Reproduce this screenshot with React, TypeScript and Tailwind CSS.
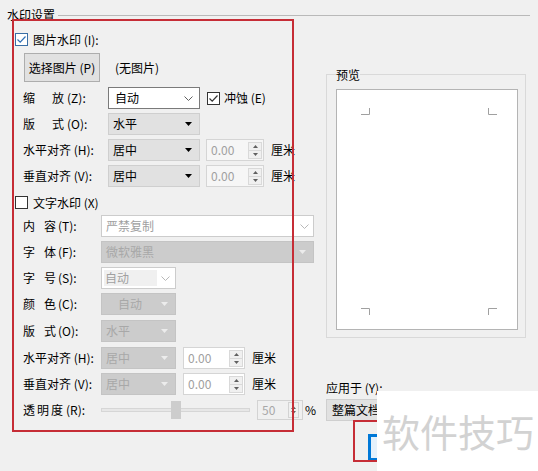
import React from "react";

const Tri = ({ color = "#000" }: { color?: string }) => (
  <svg width="7" height="4" viewBox="0 0 7 4">
    <path d="M0 0h7L3.5 4z" fill={color} />
  </svg>
);

const Chev = ({ color = "#606060" }: { color?: string }) => (
  <svg width="9" height="5" viewBox="0 0 9 5">
    <path d="M0.5 0.5L4.5 4.5L8.5 0.5" fill="none" stroke={color} strokeWidth="1" />
  </svg>
);

function Check({ checked, blue }: { checked?: boolean; blue?: boolean }) {
  return (
    <div
      className={`w-[13px] h-[13px] bg-white border flex items-center justify-center shrink-0 ${
        blue ? "border-[#3a6ea5]" : "border-[#333333]"
      }`}
    >
      {checked && (
        <svg width="11" height="11" viewBox="0 0 11 11">
          <path d="M1.5 5.5L4.2 8.2L9.5 2.5" fill="none" stroke={blue ? "#2f6fb5" : "#333"} strokeWidth="1.2" />
        </svg>
      )}
    </div>
  );
}

function GrayCombo({ text, w, disabled, center }: { text: string; w: string; disabled?: boolean; center?: boolean }) {
  return (
    <div
      className={`${w} h-[22px] border flex items-center pr-[7px] shrink-0 ${
        disabled ? "bg-[#cccccc] border-[#c4c4c4] text-[#a8a8a8]" : "bg-[#e1e1e1] border-[#cfcfcf] text-black"
      } ${center ? "pl-[16px]" : "pl-[4px]"}`}
    >
      <span className="flex-1 leading-[16px]">{text}</span>
      <Tri color={disabled ? "#ececec" : "#000"} />
    </div>
  );
}

function Spin({ w, white, value }: { w: string; white?: boolean; value: string }) {
  return (
    <div
      className={`${w} h-[22px] border border-[#d5d5d5] flex items-center pl-[4px] pr-[1px] shrink-0 ${
        white ? "bg-white" : "bg-[#f6f6f6]"
      }`}
    >
      <span className="flex-1 text-[#a0a0a0] leading-[16px]">{value}</span>
      <div className="w-[14px] h-[17px] border border-[#d9d9d9] bg-[#f0f0f0] flex flex-col">
        <div className="flex-1 flex items-center justify-center border-b border-[#d9d9d9]">
          <svg width="5" height="3" viewBox="0 0 5 3">
            <path d="M0 3h5L2.5 0z" fill="#606060" />
          </svg>
        </div>
        <div className="flex-1 flex items-center justify-center">
          <svg width="5" height="3" viewBox="0 0 5 3">
            <path d="M0 0h5L2.5 3z" fill="#606060" />
          </svg>
        </div>
      </div>
    </div>
  );
}

export default function App() {
  return (
    <div className="relative w-[538px] h-[471px] overflow-hidden bg-[#f0f0f0] text-[12px] text-black font-['Noto_Sans_CJK_SC','Microsoft_YaHei',sans-serif]">
      {/* group header */}
      <div className="h-[19px] flex items-start pl-[7px] pr-[8px]">
        <span className="mt-[7px] leading-[16px]">水印设置</span>
        <div className="flex-1 h-px bg-[#b9b9b9] mt-[15px] ml-[3px]" />
      </div>

      <div className="flex">
        {/* left column */}
        <div className="w-[326px] flex flex-col">
          <div className="mt-[14px] h-[13px] flex items-center pl-[15px] gap-[5px]">
            <Check checked blue />
            <span className="leading-[16px]">图片水印 (I):</span>
          </div>

          <div className="mt-[7px] h-[29px] flex items-center pl-[24px]">
            <button className="w-[76px] h-[29px] bg-[#e1e1e1] border border-[#adadad] leading-[16px]">
              选择图片 (P)
            </button>
            <span className="ml-[15px] leading-[16px]">(无图片)</span>
          </div>

          <div className="mt-[5px] h-[22px] flex items-center pl-[23px]">
            <div className="w-[85px] flex leading-[16px]">
              <span>缩</span>
              <span className="ml-[17px]">放</span>
              <span className="ml-[3px]">(Z):</span>
            </div>
            <div className="w-[92px] h-[22px] bg-white border border-[#7a7a7a] flex items-center pl-[6px] pr-[6px]">
              <span className="flex-1 leading-[16px]">自动</span>
              <Chev />
            </div>
            <div className="ml-[7px]">
              <Check checked />
            </div>
            <span className="ml-[4px] leading-[16px]">冲蚀 (E)</span>
          </div>

          <div className="mt-[4px] h-[22px] flex items-center pl-[23px]">
            <div className="w-[85px] flex leading-[16px]">
              <span>版</span>
              <span className="ml-[17px]">式</span>
              <span className="ml-[3px]">(O):</span>
            </div>
            <GrayCombo text="水平" w="w-[92px]" />
          </div>

          <div className="mt-[4px] h-[22px] flex items-center pl-[23px]">
            <div className="w-[85px] leading-[16px]">水平对齐 (H):</div>
            <GrayCombo text="居中" w="w-[92px]" />
            <div className="ml-[6px]">
              <Spin w="w-[58px]" value="0.00" />
            </div>
            <span className="ml-[7px] leading-[16px]">厘米</span>
          </div>

          <div className="mt-[4px] h-[22px] flex items-center pl-[23px]">
            <div className="w-[85px] leading-[16px]">垂直对齐 (V):</div>
            <GrayCombo text="居中" w="w-[92px]" />
            <div className="ml-[6px]">
              <Spin w="w-[58px]" value="0.00" />
            </div>
            <span className="ml-[7px] leading-[16px]">厘米</span>
          </div>

          <div className="mt-[9px] h-[13px] flex items-center pl-[15px] gap-[5px]">
            <Check />
            <span className="leading-[16px]">文字水印 (X)</span>
          </div>

          <div className="mt-[6px] h-[22px] flex items-center pl-[23px]">
            <div className="w-[78px] flex leading-[16px]">
              <span>内</span>
              <span className="ml-[9px]">容</span>
              <span className="ml-[2px]">(T):</span>
            </div>
            <div className="w-[213px] h-[22px] bg-white border border-[#cccccc] flex items-center pl-[4px] pr-[4px]">
              <span className="flex-1 text-[#a0a0a0] leading-[16px]">严禁复制</span>
              <Chev color="#b8b8b8" />
            </div>
          </div>

          <div className="mt-[4px] h-[22px] flex items-center pl-[23px]">
            <div className="w-[78px] flex leading-[16px]">
              <span>字</span>
              <span className="ml-[9px]">体</span>
              <span className="ml-[2px]">(F):</span>
            </div>
            <GrayCombo text="微软雅黑" w="w-[213px]" disabled />
          </div>

          <div className="mt-[4px] h-[22px] flex items-center pl-[23px]">
            <div className="w-[78px] flex leading-[16px]">
              <span>字</span>
              <span className="ml-[9px]">号</span>
              <span className="ml-[2px]">(S):</span>
            </div>
            <div className="w-[75px] h-[22px] bg-white border border-[#cccccc] flex items-center pl-[2px] pr-[5px]">
              <div className="w-[53px] h-[16px] bg-[#f0f0f0] flex items-center pl-[1px] text-[#a0a0a0] leading-[16px]">
                自动
              </div>
              <div className="flex-1 flex justify-end">
                <Chev color="#b8b8b8" />
              </div>
            </div>
          </div>

          <div className="mt-[4px] h-[22px] flex items-center pl-[23px]">
            <div className="w-[78px] flex leading-[16px]">
              <span>颜</span>
              <span className="ml-[9px]">色</span>
              <span className="ml-[2px]">(C):</span>
            </div>
            <GrayCombo text="自动" w="w-[75px]" disabled center />
          </div>

          <div className="mt-[5px] h-[22px] flex items-center pl-[23px]">
            <div className="w-[78px] flex leading-[16px]">
              <span>版</span>
              <span className="ml-[9px]">式</span>
              <span className="ml-[2px]">(O):</span>
            </div>
            <GrayCombo text="水平" w="w-[75px]" disabled />
          </div>

          <div className="mt-[5px] h-[22px] flex items-center pl-[23px]">
            <div className="w-[78px] leading-[16px]">水平对齐 (H):</div>
            <GrayCombo text="居中" w="w-[75px]" disabled />
            <div className="ml-[7px]">
              <Spin w="w-[62px]" value="0.00" white />
            </div>
            <span className="ml-[7px] leading-[16px]">厘米</span>
          </div>

          <div className="mt-[4px] h-[22px] flex items-center pl-[23px]">
            <div className="w-[78px] leading-[16px]">垂直对齐 (V):</div>
            <GrayCombo text="居中" w="w-[75px]" disabled />
            <div className="ml-[7px]">
              <Spin w="w-[62px]" value="0.00" white />
            </div>
            <span className="ml-[7px] leading-[16px]">厘米</span>
          </div>

          <div className="mt-[4px] h-[21px] flex items-center pl-[23px]">
            <div className="w-[78px] flex leading-[16px]">
              <span>透</span>
              <span className="ml-[2px]">明</span>
              <span className="ml-[2px]">度</span>
              <span className="ml-[3px]">(R):</span>
            </div>
            <div className="relative w-[149px] h-[18px] flex items-center">
              <div className="w-full h-[4px] bg-[#e7e7e7] border border-[#d6d6d6]" />
              <div className="absolute left-[70px] top-0 w-[10px] h-[18px] bg-[#cdcdcd]" />
            </div>
            <div className="ml-[7px] w-[46px] h-[20px] border border-[#d3d3d3] flex items-center pl-[4px] pr-[3px]">
              <span className="flex-1 text-[#a8a8a8] leading-[16px]">50</span>
              <div className="w-[11px] h-[16px] border border-[#d3d3d3] flex flex-col items-center justify-center gap-[2px]">
                <svg width="5" height="3" viewBox="0 0 5 3">
                  <path d="M0 3h5L2.5 0z" fill="#606060" />
                </svg>
                <svg width="5" height="3" viewBox="0 0 5 3">
                  <path d="M0 0h5L2.5 3z" fill="#606060" />
                </svg>
              </div>
            </div>
            <span className="ml-[2px] leading-[16px]">%</span>
          </div>
        </div>

        {/* right column */}
        <div className="w-[200px] flex flex-col">
          <div className="relative mt-[55px] h-[264px] border border-[#d9d9d9]">
            <span className="absolute left-[9px] -top-[8px] leading-[16px] bg-[#f0f0f0]">预览</span>
            <div className="mt-[14px] ml-[9px] w-[182px] h-[241px] bg-white border border-[#b4b4b4]">
              <svg width="180" height="239" viewBox="0 0 180 239">
                <g fill="none" stroke="#a0a0a0" strokeWidth="1">
                  <path d="M24 24.5H32.5V18" />
                  <path d="M151.5 18V24.5H160" />
                  <path d="M24 218.5H32.5V225" />
                  <path d="M151.5 225V218.5H160" />
                </g>
              </svg>
            </div>
          </div>
          <span className="mt-[42px] leading-[16px]">应用于 (Y):</span>
          <div className="mt-[3px] w-[140px] h-[22px] bg-[#e1e1e1] border border-[#cfcfcf] flex items-center pl-[5px] pr-[7px]">
            <span className="flex-1 leading-[16px]">整篇文档</span>
            <Tri />
          </div>
        </div>
      </div>

      {/* annotation: red frame around watermark options */}
      <div className="absolute left-[12px] top-[19px] w-[282px] h-[413px] border-2 border-[#c62d36] pointer-events-none" />

      {/* focused button under annotation */}
      <div className="absolute left-[368px] top-[434px] w-[70px] h-[27px] border-[3px] border-[#0078d7] bg-[#e5f1fb]" />
      <div className="absolute left-[353px] top-[420px] w-[100px] h-[42px] border-2 border-[#c62d36]" />

      {/* watermark overlay */}
      <div className="absolute left-[377px] top-[391px] w-[161px] h-[80px] bg-white pl-[5px] pt-[21px]">
        <span className="text-[38px] leading-[38px] text-[#d2d2d2] whitespace-nowrap">软件技巧</span>
      </div>
    </div>
  );
}
